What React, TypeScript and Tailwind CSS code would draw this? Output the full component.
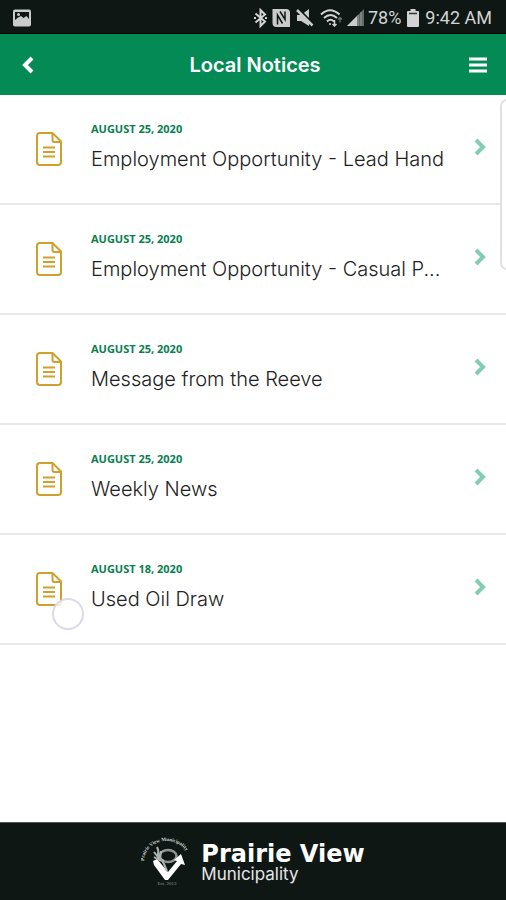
const notices = [
  { date: 'AUGUST 25, 2020', title: 'Employment Opportunity - Lead Hand' },
  { date: 'AUGUST 25, 2020', title: 'Employment Opportunity - Casual P...' },
  { date: 'AUGUST 25, 2020', title: 'Message from the Reeve' },
  { date: 'AUGUST 25, 2020', title: 'Weekly News' },
  { date: 'AUGUST 18, 2020', title: 'Used Oil Draw', touched: true },
];

const StatusBar = () => (
  <div className="flex h-[34px] items-center justify-between bg-[#0f1715] pt-0.5 pl-3 pr-3.5 font-['Roboto',sans-serif] text-lg leading-6 text-[#d2d4d3] border-b border-black">
    <svg width="20" height="18" viewBox="0 0 20 18" aria-hidden="true">
      <rect x="1" y="0.5" width="18" height="17" rx="2" fill="#c9cccb" />
      <path d="M3 3h14v7l-2.500-3-3 2-2.500-2-3 1.500L3 11z" fill="#0f1715" />
      <circle cx="6.500" cy="5.500" r="1.500" fill="#c9cccb" />
    </svg>

    <div className="flex items-center">
      {/* Bluetooth */}
      <svg className="mr-1" width="15" height="20" viewBox="0 0 15 20" fill="none" stroke="currentColor" strokeWidth="2" aria-hidden="true">
        <path d="M2.500 5.500l9.500 8-4.500 4.500V2l4.500 4.500-9.500 8" />
        <path d="M1 10h2M12 10h2" />
      </svg>

      {/* NFC */}
      <svg className="mr-1.5" width="18" height="20" viewBox="0 0 18 20" aria-hidden="true">
        <path d="M0.500 1H14q4 0 4 4v14H4.500q-4 0-4-4z" fill="#c9cccb" />
        <path d="M5.500 16.500V7l5 8.500M8 3.500l5 8V3.500" fill="none" stroke="#0f1715" strokeWidth="1.500" />
      </svg>

      {/* Muted */}
      <svg className="mr-1.5" width="18" height="20" viewBox="0 0 18 20" aria-hidden="true">
        <path d="M1 7h4l8-6v17l-8-5H1z" fill="#c9cccb" />
        <path d="M3 2l14 14" stroke="#0f1715" strokeWidth="3" />
        <path d="M1 2l15.500 15.500" stroke="#c9cccb" strokeWidth="2.500" />
      </svg>

      {/* Wi-Fi */}
      <svg className="mr-1" width="23" height="20" viewBox="0 0 23 20" fill="none" stroke="currentColor" strokeWidth="2" aria-hidden="true">
        <path d="M1 6.500Q10-2 19.500 6.500" />
        <path d="M4 10q6.500-6 13 0" />
        <path d="M7 13.500q3.500-3.500 7 0" />
        <circle cx="10" cy="16" r="1" fill="currentColor" stroke="none" />
        <path d="M14.500 12v6m-2-2l2 2 2-2" strokeWidth="1.500" />
        <path d="M20 9.500v5m-2-3l2-2 2 2" stroke="#6f7573" strokeWidth="1.200" />
      </svg>

      {/* Signal */}
      <svg className="mr-1" width="17" height="20" viewBox="0 0 17 20" aria-hidden="true">
        <path d="M0 18L17 1v17z" fill="#626866" />
        <path d="M0 18L10 8v10z" fill="#c9cccb" />
        <path d="M11 7v11M14 4v14" stroke="#9a9e9c" strokeWidth="1" />
      </svg>

      <span className="mr-1.5">78%</span>
      <svg className="mr-1.5" width="12" height="18" viewBox="0 0 12 18" fill="#d2d4d3" aria-hidden="true">
        <path d="M3.500 0h5v2H11a1 1 0 0 1 1 1v14a1 1 0 0 1-1 1H1a1 1 0 0 1-1-1V3a1 1 0 0 1 1-1h2.500z" />
        <path d="M2 4.500h8" stroke="#303735" strokeWidth="1.500" />
      </svg>
      <span>9:42 AM</span>
    </div>
  </div>
);

const DocumentIcon = () => (
  <svg width="26" height="34" viewBox="0 0 26 34" fill="none" stroke="#d0a02c" strokeWidth="2" aria-hidden="true">
    <path d="M16.500 1H4a3 3 0 0 0-3 3v26a3 3 0 0 0 3 3h18a3 3 0 0 0 3-3V9.500z" />
    <path d="M16.500 1v7a2 2 0 0 0 2 2H25" />
    <path d="M7 15.500h12M7 20h12M7 24.500h12" />
  </svg>
);

const Crest = () => (
  <svg width="50" height="50" viewBox="0 0 50 50" aria-hidden="true">
    <path id="crest-arc" d="M3 24A22.500 20 0 0 1 48 24" fill="none" />
    <text fill="#d4d8d6" className="font-['Liberation_Serif',serif] text-[5px] font-bold">
      <textPath href="#crest-arc">Prairie View Municipality</textPath>
    </text>
    <ellipse cx="27" cy="19" rx="8.500" ry="6" fill="none" stroke="#8f9593" strokeWidth="2.500" />
    <path d="M13 28l-1-4 4-2 11 13L36 24l-3-1 7-6 4 11-4-1-13 16h-3z" fill="#fff" />
    <path d="M16 10q2 4 1 7l6 10 3 7M13 15l4 5 6 4M20 14l-1 9M13 20l7 4" fill="none" stroke="#aeb3b1" strokeWidth="2" />
    <text x="26" y="48" textAnchor="middle" fill="#8f9593" className="font-['Liberation_Serif',serif] text-[5px]">
      Est. 2013
    </text>
  </svg>
);

export default function App() {
  return (
    <div className="flex min-h-screen flex-col bg-white font-['Inter',sans-serif]">
      <StatusBar />

      {/* Title bar */}
      <header className="flex h-[61px] items-center justify-between bg-[#048a55] pl-5 pr-4 text-white">
        <button type="button" aria-label="Back" className="flex w-6 justify-start">
          <svg width="14" height="18" viewBox="0 0 14 18" fill="none" stroke="currentColor" strokeWidth="4" aria-hidden="true">
            <path d="M12 2L5 9l7 7" />
          </svg>
        </button>
        <h1 className="text-xl font-semibold">Local Notices</h1>
        <button type="button" aria-label="Menu" className="flex w-6 justify-center">
          <svg width="18" height="16" viewBox="0 0 18 16" stroke="currentColor" strokeWidth="3" aria-hidden="true">
            <path d="M0 2h18M0 8h18M0 14h18" />
          </svg>
        </button>
      </header>

      <main className="relative flex-1 overflow-hidden">
        <ul>
          {notices.map((notice, i) => (
            <li key={i} className="border-b-2 border-[#e7e8e7]">
              <a href="#" className="flex h-[108px] items-center pl-9 pr-5">
                <div className="relative mr-[29px] shrink-0">
                  <DocumentIcon />
                  {notice.touched && (
                    <span className="absolute left-4 top-6.5 size-8 rounded-full border-2 border-[#d8d8ee] bg-white/80" />
                  )}
                </div>
                <div className="mb-1 min-w-0 flex-1">
                  <p className="font-['Open_Sans',sans-serif] text-[11px] leading-4 font-bold text-[#07804f]">{notice.date}</p>
                  <h2 className="mt-2 truncate text-xl leading-7 font-light text-[#222]">{notice.title}</h2>
                </div>
                <svg className="mb-1 shrink-0" width="12" height="18" viewBox="0 0 12 18" fill="none" stroke="#83cdb0" strokeWidth="4" aria-hidden="true">
                  <path d="M2 2l7 7-7 7" />
                </svg>
              </a>
            </li>
          ))}
        </ul>

        {/* Edge panel handle */}
        <div className="absolute top-1 -right-2 h-[171px] w-3.5 rounded-lg border-2 border-[#e0e1e1] bg-white" />
      </main>

      <footer className="flex h-[78px] items-center justify-center gap-2.5 border-t border-[#555] bg-[#0f1715] text-white">
        <Crest />
        <div className="pt-1">
          <p className="font-['DejaVu_Sans',sans-serif] text-2xl leading-5 font-bold">Prairie View</p>
          <p className="text-[17px] leading-5 text-[#e4e6e5]">Municipality</p>
        </div>
      </footer>
    </div>
  );
}
